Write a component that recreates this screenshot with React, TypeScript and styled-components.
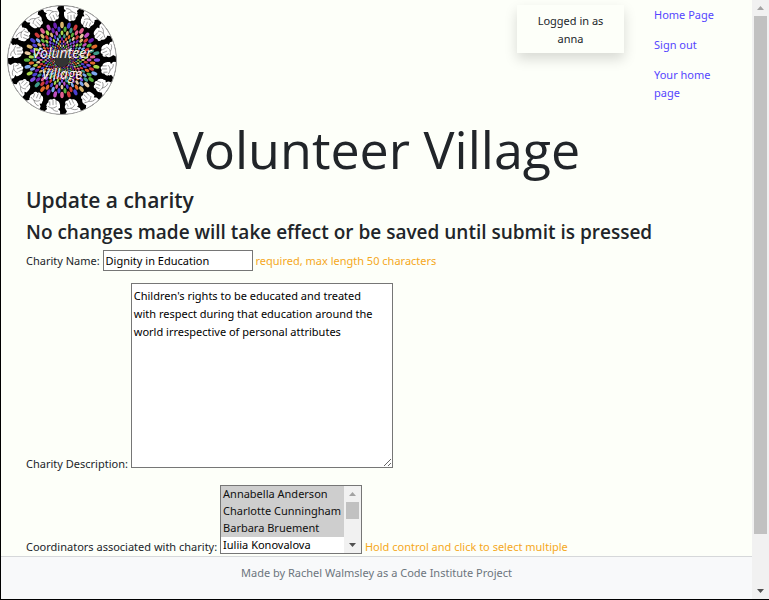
import React from "react";
import styled, { createGlobalStyle } from "styled-components";

const GlobalStyle = createGlobalStyle`
  *, *::before, *::after { box-sizing: border-box; }
  body {
    margin: 0;
    background: #fdfff9;
    color: #212529;
    font-family: "Noto Sans", "Open Sans", sans-serif;
    font-size: 11px;
    line-height: 18px;
  }
`;

const Window = styled.div`
  display: flex;
  height: 100vh;
  border-left: 1px solid #000;
  border-bottom: 1px solid #000;
`;

const Page = styled.div`
  display: flex;
  flex: 1;
  flex-direction: column;
  min-width: 0;
  overflow: hidden;
`;

const Header = styled.header`
  display: flex;
  align-items: flex-start;
  padding: 5px 15px 0 6px;
`;

const HomeLink = styled.a`
  display: block;
  margin-right: auto;
`;

const LogoDrawing = styled.svg`
  display: block;
  width: 110px;
  height: 110px;
`;

const LogoText = styled.text`
  fill: #f4f4f4;
  font-family: "Open Sans", sans-serif;
  font-size: 14px;
  font-style: italic;
  text-anchor: middle;
`;

const UserCard = styled.div`
  width: 107px;
  padding: 7px 16px 5px;
  margin-right: 30px;
  text-align: center;
  background: #fdfff9;
  box-shadow: 0 6px 12px rgba(0, 0, 0, 0.15);
`;

const Nav = styled.nav`
  display: flex;
  flex-direction: column;
  gap: 12px;
  width: 75px;
  margin-right: 8px;
  padding-top: 1px;
`;

const NavLink = styled.a`
  color: #5546ff;
  text-decoration: none;
`;

const Title = styled.h1`
  margin: 0;
  font-family: "Open Sans", "Noto Sans", sans-serif;
  font-size: 52px;
  font-weight: 400;
  line-height: 68px;
  text-align: center;
`;

const Main = styled.main`
  flex: 1;
  min-height: 0;
  padding: 0 25px;
`;

const Headings = styled.div`
  padding-bottom: 2px;
`;

const Heading = styled.h2<{ $size: number; $line: number }>`
  margin: 0;
  font-family: "Open Sans", "Noto Sans", sans-serif;
  font-size: ${(p) => p.$size}px;
  font-weight: 600;
  line-height: ${(p) => p.$line}px;
  white-space: nowrap;
`;

const Field = styled.div`
  margin-bottom: 12px;
  white-space: nowrap;
`;

const Hint = styled.span`
  color: #f5a81c;
`;

const TextInput = styled.input`
  width: 150px;
  height: 21px;
  padding: 1px 2px;
  border: 1px solid #767676;
  border-radius: 0;
  background: #fff;
  color: #000;
  font: inherit;
`;

const TextArea = styled.textarea`
  width: 262px;
  height: 185px;
  padding: 3px 15px 3px 2px;
  border: 1px solid #767676;
  background: #fff;
  color: #000;
  font: inherit;
  overflow: hidden;
`;

const ListFrame = styled.span`
  display: inline-flex;
  width: 142px;
  height: 69px;
  border: 1px solid #767676;
  background: #fff;
  vertical-align: text-bottom;
`;

const ListBox = styled.select`
  flex: 1;
  min-width: 0;
  padding: 0;
  border: 0;
  border-radius: 0;
  outline: 0;
  background: #fff;
  color: #000;
  font: inherit;
  scrollbar-width: none;

  option {
    min-height: 17px;
    padding: 0 2px;
    line-height: 17px;
  }

  option:checked {
    background: #cecece;
    color: #101010;
  }
`;

const Track = styled.div`
  display: flex;
  flex: none;
  flex-direction: column;
  width: 17px;
  background: #f1f1f1;
`;

const ArrowIcon = styled.svg`
  display: block;
  flex: none;
  width: 17px;
  height: 16px;
`;

const Thumb = styled.div<{ $share: number }>`
  flex: ${(p) => p.$share} 0 0;
  margin: 0 2px;
  background: #c1c1c1;
`;

const Rest = styled.div<{ $share: number }>`
  flex: ${(p) => p.$share} 0 0;
`;

const Footer = styled.footer`
  flex: none;
  height: 43px;
  padding-top: 7px;
  border-top: 1px solid #d6d8da;
  background: #f8f9fa;
  color: #6c757d;
  text-align: center;
`;

function ScrollBar({ thumb, rest }: { thumb: number; rest: number }) {
  return (
    <Track aria-hidden="true">
      <ArrowIcon viewBox="0 0 17 16">
        <path d="M5 10h7L8.500 6z" fill="#a3a3a3" />
      </ArrowIcon>
      <Thumb $share={thumb} />
      <Rest $share={rest} />
      <ArrowIcon viewBox="0 0 17 16">
        <path d="M5 6h7L8.500 10z" fill="#505050" />
      </ArrowIcon>
    </Track>
  );
}

const SEED_COLOURS = [
  "#d9b56d", "#7d4fe0", "#e0608f", "#58b03c", "#e06a2c", "#4a3fd0",
  "#a8d64a", "#c04fc0", "#e8c9a0", "#3f9a8a", "#d03a3a", "#7fa8f0", "#6a1fb0",
];

const seeds = Array.from({ length: 13 }).flatMap((_, ring) => {
  const radius = 35 * Math.pow(0.88, ring);
  return Array.from({ length: 32 }).map((__, i) => ({
    key: `${ring}-${i}`,
    angle: (i + (ring % 2) / 2) * 11.25,
    radius,
    colour: SEED_COLOURS[(i * 5 + ring * 3 + ((i * ring) % 4)) % SEED_COLOURS.length],
  }));
});

const handAngles = Array.from({ length: 16 }).map((_, i) => i * 22.5 + 11.25);

function Logo() {
  return (
    <LogoDrawing viewBox="-55 -55 110 110" role="img" aria-label="Volunteer Village">
      <defs>
        <clipPath id="disc">
          <circle r="54" />
        </clipPath>
      </defs>
      <circle r="54.500" fill="#000" stroke="#999" strokeWidth="1" />
      <g clipPath="url(#disc)">
        {handAngles.map((a) => (
          <g key={a} transform={`rotate(${a}) translate(0 -46)`}>
            <path
              d="M-9 -9C-8 -5 -8 -2 -7 1C-6 4 -4 6 -2 5C-1 7 1 7 2 5C4 6 6 4 5 2C7 0 7 -3 5 -5L9 -10z"
              fill="#fff"
            />
            <path
              d="M-4 0C-2 -3 1 -4 5 -2M-3 1L-2 5M0 0L1 5M3 -1L4 3M-6 -5C-4 -6 -1 -5 1 -3"
              fill="none"
              stroke="#666"
              strokeWidth=".6"
            />
          </g>
        ))}
        {handAngles.map((a) => (
          <path
            key={a}
            d="M0 -53L4 -49L2 -48L2 -41L-2 -41L-2 -48L-4 -49z"
            fill="#000"
            transform={`rotate(${a - 11.25})`}
          />
        ))}
        {seeds.map((s) => (
          <ellipse
            key={s.key}
            cy={-s.radius}
            rx={s.radius * 0.052}
            ry={s.radius * 0.09}
            fill={s.colour}
            transform={`rotate(${s.angle})`}
          />
        ))}
      </g>
      <circle r="7" fill="#555" opacity=".6" />
      <LogoText x="0" y="-2">Volunteer</LogoText>
      <LogoText x="0" y="19">Village</LogoText>
    </LogoDrawing>
  );
}

export default function App() {
  return (
    <>
      <GlobalStyle />
      <Window>
        <Page>
          <Header>
            <HomeLink href="#">
              <Logo />
            </HomeLink>
            <UserCard>Logged in as anna</UserCard>
            <Nav>
              <NavLink href="#">Home Page</NavLink>
              <NavLink href="#">Sign out</NavLink>
              <NavLink href="#">Your home page</NavLink>
            </Nav>
          </Header>
          <Title>Volunteer Village</Title>
          <Main>
            <Headings>
              <Heading $size={21} $line={34}>Update a charity</Heading>
              <Heading as="h3" $size={19} $line={31}>
                No changes made will take effect or be saved until submit is pressed
              </Heading>
            </Headings>
            <Field>
              <label htmlFor="name">Charity Name:</label>{" "}
              <TextInput id="name" type="text" maxLength={50} required defaultValue="Dignity in Education" />{" "}
              <Hint>required, max length 50 characters</Hint>
            </Field>
            <Field>
              <label htmlFor="description">Charity Description:</label>{" "}
              <TextArea
                id="description"
                defaultValue="Children's rights to be educated and treated with respect during that education around the world irrespective of personal attributes"
              />
            </Field>
            <Field>
              <label htmlFor="coordinators">Coordinators associated with charity:</label>{" "}
              <ListFrame>
                <ListBox
                  id="coordinators"
                  multiple
                  size={4}
                  defaultValue={["Annabella Anderson", "Charlotte Cunningham", "Barbara Bruement"]}
                >
                  <option>Annabella Anderson</option>
                  <option>Charlotte Cunningham</option>
                  <option>Barbara Bruement</option>
                  <option>Iuliia Konovalova</option>
                </ListBox>
                <ScrollBar thumb={17} rest={18} />
              </ListFrame>{" "}
              <Hint>Hold control and click to select multiple</Hint>
            </Field>
          </Main>
          <Footer>Made by Rachel Walmsley as a Code Institute Project</Footer>
        </Page>
        <ScrollBar thumb={518} rest={49} />
      </Window>
    </>
  );
}
